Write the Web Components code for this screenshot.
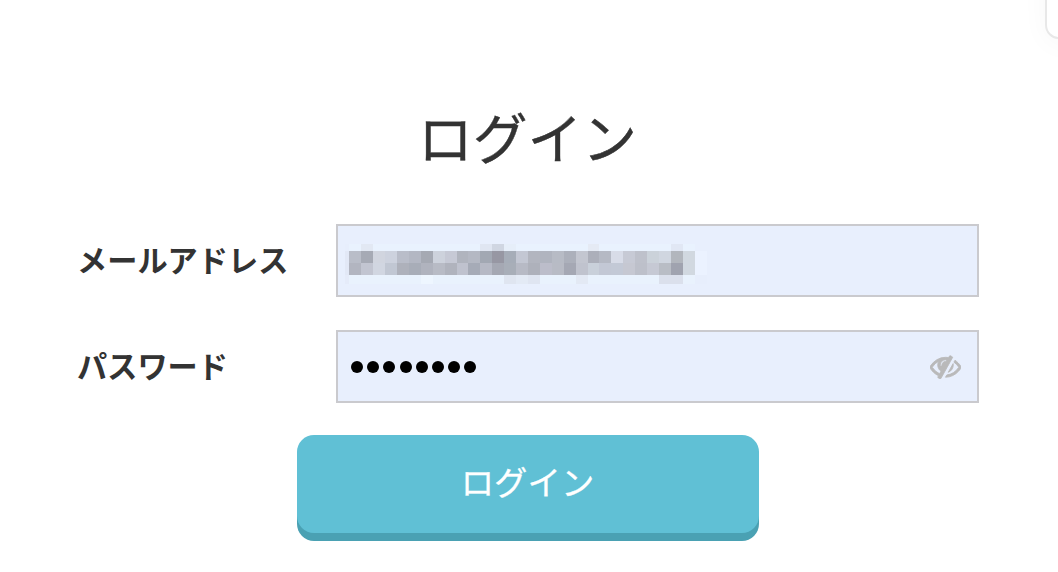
<!DOCTYPE html>
<html lang="ja">
<head>
<meta charset="utf-8">
<title>ログイン</title>
<style>
html,body{margin:0;height:100%;overflow:hidden;background:#fff}
body{font-family:"Noto Sans CJK JP",sans-serif;color:#333}
</style>
</head>
<body>
<login-page></login-page>
<script>
const define = (name, html, setup) => customElements.define(name, class extends HTMLElement {
  constructor() {
    super();
    const t = document.createElement('template');
    t.innerHTML = html;
    this.attachShadow({mode: 'open'}).append(t.content.cloneNode(true));
    if (setup) setup(this.shadowRoot);
  }
});

define('masked-address', `
<style>
:host{display:grid;grid-template-columns:4.7px repeat(29,11.92px) 12px;grid-template-rows:7.3px 12px 12.2px 9.5px;margin:7px 0 0 6.7px;width:max-content}
</style>`, root => {
  const pad = (base, over) => Array.from({length: 29}, (_, i) => over[i] || base);
  const rows = [
    ['e7eefc', ...pad('e9f2fe', {1:'e2e8f3',11:'e0e6f2',12:'d0d6e2',13:'e6eef9',20:'e5eaf4',27:'e1e7f4'}), 'e8effd'],
    ['e2e8f6', ...'b9bdc8 a6aab5 d1d5df cdd2de b9bdc9 b3b7c3 a5a9b3 cdd2dc c6c9d5 b0b4be b4b8c3 a2a8b3 9797a3 a6adb8 c3c7d3 b2b5bf b0b4bf b7bbc5 acb0bb c3c6d0 acafba b5b9c4 d8dce8 c7cad5 bec1cb cbd2da d0d6e0 b2b6bd d1d8e0'.split(' '), 'ebf2ff'],
    ['e2e8f6', ...'b2b5c0 c2c5d1 d1d6e1 c1c7d3 aeb1bb a8adb8 b0b3be b8bbc5 b0b3bd bfc2ce a6abb7 b6b9c5 a5a8b3 a8aeb8 b7bac5 aeb1bb bcbdca b8bbc5 a5a8b4 c0c3ce c9d0da c3c8d5 c3c9d6 c6c8d2 bdc0ca c6c9d4 b9bdc5 a0a3af d1d8e0'.split(' '), 'ebf2ff'],
    ['e5ebf9', ...pad('e9f2fd', {6:'eef6ff',13:'dfe5f0',14:'e3eaf5',15:'dfe5f1',19:'e3e9f4',26:'dbe0ec',27:'dbe0ec'}), 'e7eefc']
  ];
  for (const color of rows.flat()) {
    const cell = document.createElement('i');
    cell.style.background = '#' + color;
    root.append(cell);
  }
});

define('password-dots', `
<style>
:host{display:flex;gap:4.2px;margin-left:13px}
i{width:12px;height:12px;border-radius:50%;background:#000}
</style>` + '<i></i>'.repeat(8));

define('eye-toggle', `
<style>:host{display:block;margin:0 16px 0 auto}svg{display:block}</style>
<svg width="31" height="24" viewBox="0 0 1792 1387"><path fill="#b9b9ba" stroke="#b9b9ba" stroke-width="50" stroke-linejoin="round" transform="matrix(1 0 0 -1 0 1285)" d="M555 201l78 141q-87 63-136 159t-49 203q0 121 61 225q-229-117-381-353q167-258 427-375zM944 960q0 20-14 34t-34 14q-125 0-214.5-89.5t-89.5-214.5q0-20 14-34t34-14t34 14t14 34q0 86 61 147t147 61q20 0 34 14t14 34zM1307 1151q0-7-1-9q-106-189-316-567t-315-566l-49-89q-10-16-28-16q-12 0-134 70q-16 10-16 28q0 12 44 87q-143 65-263.5 173t-208.5 245q-20 31-20 69t20 69q153 235 380 371t496 136q89 0 180-17l54 97q10 16 28 16q5 0 18-6t31-15.5t33-18.5t31.5-18.5t19.5-11.5q16-10 16-27zM1344 704q0-139-79-253.5t-209-164.5l280 502q8-45 8-84zM1792 576q0-35-20-69q-39-64-109-145q-150-172-347.5-267t-419.5-95l74 132q212 18 392.5 137t301.5 307q-115 179-282 294l63 112q95-64 182.5-153t144.5-184q20-34 20-69z"/></svg>`);

define('form-row', `
<style>
:host{display:grid;grid-template-columns:258px 643px;align-items:center;height:73px}
.label{font-weight:700;font-size:30.2px;line-height:44px;padding-bottom:3px;margin-left:-1px;white-space:nowrap}
.field{box-sizing:border-box;height:73px;border:2px solid #cacace;background:#e8effd;display:flex;align-items:center}
</style>
<div class="label"><slot name="label"></slot></div>
<div class="field"><slot></slot></div>`);

define('submit-button', `
<style>
:host{display:block}
button{display:block;width:462px;height:98px;margin:0;padding:0 1px 6px 0;border:0;border-radius:17px;background:#60c0d5;box-shadow:0 8px #4aa1b3;color:#fff;font:400 33.4px/48px "Noto Sans CJK JP",sans-serif;-webkit-text-stroke:.3px #fff}
</style>
<button type="button"><slot></slot></button>`);

define('corner-panel', `
<style>
:host{display:block;box-sizing:border-box;position:absolute;left:1045px;top:-60px;width:100px;height:99px;border:2px solid #e8e8e8;border-radius:14px;background:#fff;box-shadow:0 4px 28px rgba(0,0,0,.035)}
</style>`);

define('login-page', `
<style>
:host{display:block;position:relative;width:1058px;height:572px;overflow:hidden;box-sizing:border-box;padding:95px 0 0 78px}
h1{margin:0 0 49px;width:899px;text-align:center;font-weight:400;font-size:54.8px;line-height:80px;-webkit-text-stroke:.4px #333}
.rows{display:grid;gap:33px}
submit-button{margin:32px 0 0 219px}
</style>
<h1>ログイン</h1>
<div class="rows">
<form-row><span slot="label">メールアドレス</span><masked-address></masked-address></form-row>
<form-row><span slot="label">パスワード</span><password-dots></password-dots><eye-toggle></eye-toggle></form-row>
</div>
<submit-button>ログイン</submit-button>
<corner-panel></corner-panel>`);
</script>
</body>
</html>
